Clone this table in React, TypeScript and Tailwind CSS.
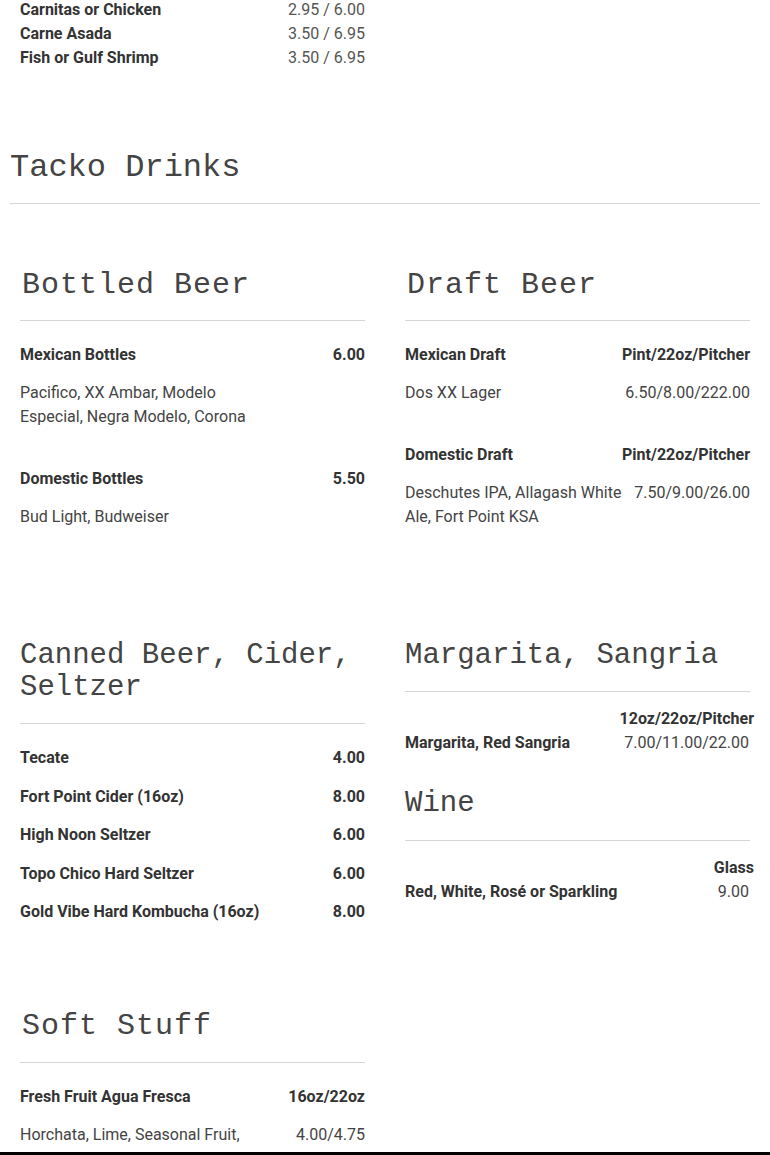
const body = { fontFamily: 'Roboto, "Liberation Sans", sans-serif' };
const mono = { fontFamily: '"Courier New", "Liberation Mono", monospace' };

type Item = { name: string; price: string; desc?: string; descPrice?: string };

// row 2 headings render a touch narrower in the original
function Heading({ children, tight = false }: { children: React.ReactNode; tight?: boolean }) {
    return (
        <h3
            style={mono}
            className={
                tight
                    ? 'text-[29px] leading-[32px] text-[#444] font-normal'
                    : 'text-[30px] leading-[32px] tracking-[1px] text-[#444] font-normal pl-[2px]'
            }
        >
            {children}
        </h3>
    );
}

function Rule({ className = '' }: { className?: string }) {
    return <div className={`h-px bg-[#d6d6d6] ${className}`} />;
}

function ItemList({ items }: { items: Item[] }) {
    return (
        <div className="mt-[22px] flex flex-col gap-y-[38px]">
            {items.map((it) => (
                <div key={it.name}>
                    <div className="flex justify-between text-[16px] leading-[24px] font-bold text-[#333]">
                        <span>{it.name}</span>
                        <span>{it.price}</span>
                    </div>
                    {it.desc && (
                        <div className="mt-[14px] flex text-[16px] leading-[24px] text-[#444]">
                            <span className="w-2/3">{it.desc}</span>
                            <span className="flex-1 text-right">{it.descPrice}</span>
                        </div>
                    )}
                </div>
            ))}
        </div>
    );
}

function SizedRow({ size, name, price }: { size: string; name: string; price: string }) {
    return (
        <div className="mt-[15px] text-[16px] leading-[24px]">
            <div className="text-right font-bold text-[#333] -mr-[4px]">{size}</div>
            <div className="flex justify-between pr-px">
                <span className="font-bold text-[#333]">{name}</span>
                <span className="text-[#444]">{price}</span>
            </div>
        </div>
    );
}

const tacos = [
    { name: 'Carnitas or Chicken', price: '2.95 / 6.00' },
    { name: 'Carne Asada', price: '3.50 / 6.95' },
    { name: 'Fish or Gulf Shrimp', price: '3.50 / 6.95' },
];

const canned = [
    { name: 'Tecate', price: '4.00' },
    { name: 'Fort Point Cider (16oz)', price: '8.00' },
    { name: 'High Noon Seltzer', price: '6.00' },
    { name: 'Topo Chico Hard Seltzer', price: '6.00' },
    { name: 'Gold Vibe Hard Kombucha (16oz)', price: '8.00' },
];

export default function App() {
    return (
        <div style={body} className="w-[770px] min-h-[1155px] bg-white pb-[40px]">
            {/* tail of the taco section */}
            <div className="px-[20px] -mt-[2px] grid grid-cols-2 gap-x-[40px]">
                <div>
                    {tacos.map((t) => (
                        <div key={t.name} className="flex justify-between text-[16px] leading-[24px]">
                            <span className="font-bold text-[#333]">{t.name}</span>
                            <span className="text-[#555]">{t.price}</span>
                        </div>
                    ))}
                </div>
            </div>

            <div className="px-[10px]">
                <h2 style={mono} className="mt-[78px] text-[32px] leading-[40px] text-[#444] font-normal">
                    Tacko Drinks
                </h2>
                <Rule className="mt-[15px]" />
            </div>

            {/* Bottled / Draft */}
            <div className="px-[20px] mt-[65px] grid grid-cols-2 gap-x-[40px] items-start">
                <div>
                    <Heading>Bottled Beer</Heading>
                    <Rule className="mt-[19px]" />
                    <ItemList
                        items={[
                            { name: 'Mexican Bottles', price: '6.00', desc: 'Pacifico, XX Ambar, Modelo Especial, Negra Modelo, Corona' },
                            { name: 'Domestic Bottles', price: '5.50', desc: 'Bud Light, Budweiser' },
                        ]}
                    />
                </div>
                <div>
                    <Heading>Draft Beer</Heading>
                    <Rule className="mt-[19px]" />
                    <ItemList
                        items={[
                            { name: 'Mexican Draft', price: 'Pint/22oz/Pitcher', desc: 'Dos XX Lager', descPrice: '6.50/8.00/222.00' },
                            { name: 'Domestic Draft', price: 'Pint/22oz/Pitcher', desc: 'Deschutes IPA, Allagash White Ale, Fort Point KSA', descPrice: '7.50/9.00/26.00' },
                        ]}
                    />
                </div>
            </div>

            {/* Canned / Margarita + Wine */}
            <div className="px-[20px] mt-[111px] grid grid-cols-2 gap-x-[40px] items-start">
                <div>
                    <Heading tight>Canned Beer, Cider, Seltzer</Heading>
                    <Rule className="mt-[19px]" />
                    <div className="mt-[22px] flex flex-col gap-y-[14.5px]">
                        {canned.map((c) => (
                            <div key={c.name} className="flex justify-between text-[16px] leading-[24px] font-bold text-[#333]">
                                <span>{c.name}</span>
                                <span>{c.price}</span>
                            </div>
                        ))}
                    </div>
                </div>
                <div>
                    <Heading tight>Margarita, Sangria</Heading>
                    <Rule className="mt-[19px]" />
                    <SizedRow size="12oz/22oz/Pitcher" name="Margarita, Red Sangria" price="7.00/11.00/22.00" />

                    <div className="mt-[33px]">
                        <Heading tight>Wine</Heading>
                    </div>
                    <Rule className="mt-[20px]" />
                    <SizedRow size="Glass" name="Red, White, Rosé or Sparkling" price="9.00" />
                </div>
            </div>

            {/* Soft Stuff */}
            <div className="px-[20px] mt-[86px] grid grid-cols-2 gap-x-[40px] items-start">
                <div>
                    <Heading>Soft Stuff</Heading>
                    <Rule className="mt-[20px]" />
                    <ItemList
                        items={[
                            { name: 'Fresh Fruit Agua Fresca', price: '16oz/22oz', desc: 'Horchata, Lime, Seasonal Fruit,', descPrice: '4.00/4.75' },
                        ]}
                    />
                </div>
            </div>

            <div className="fixed bottom-0 left-0 right-0 h-[3px] bg-black" />
        </div>
    );
}
